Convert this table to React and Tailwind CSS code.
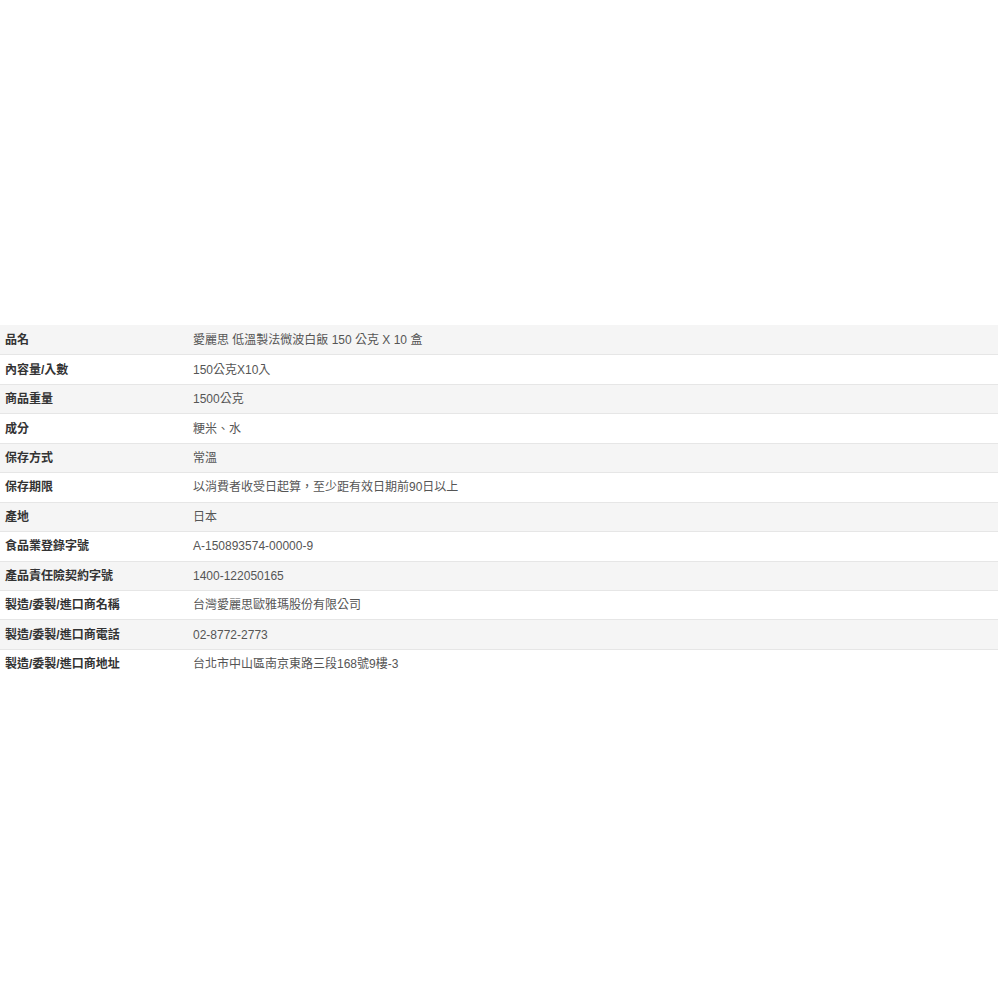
const ROWS = [
  ['品名', '愛麗思 低溫製法微波白飯 150 公克 X 10 盒'],
  ['內容量/入數', '150公克X10入'],
  ['商品重量', '1500公克'],
  ['成分', '粳米、水'],
  ['保存方式', '常溫'],
  ['保存期限', '以消費者收受日起算，至少距有效日期前90日以上'],
  ['產地', '日本'],
  ['食品業登錄字號', 'A-150893574-00000-9'],
  ['產品責任險契約字號', '1400-122050165'],
  ['製造/委製/進口商名稱', '台灣愛麗思歐雅瑪股份有限公司'],
  ['製造/委製/進口商電話', '02-8772-2773'],
  ['製造/委製/進口商地址', '台北市中山區南京東路三段168號9樓-3'],
];

export default function App() {
  return (
    <div
      className="w-[1000px] h-[1000px] bg-white pt-[325px]"
      style={{ fontFamily: '"Liberation Sans", Arial, "Noto Sans CJK TC", sans-serif' }}
    >
      <div className="w-[998px]">
        {ROWS.map(([label, value], i) => (
          <div
            key={label}
            className={`flex items-center h-[29.45px] text-[12px] ${
              i > 0 ? 'border-t border-[#e6e6e6]' : ''
            } ${i % 2 === 0 ? 'bg-[#f5f5f5]' : 'bg-white'}`}
          >
            <div className="w-[193px] pl-[5px] font-bold text-[#333]">{label}</div>
            <div className="text-[#555]">{value}</div>
          </div>
        ))}
      </div>
    </div>
  );
}
